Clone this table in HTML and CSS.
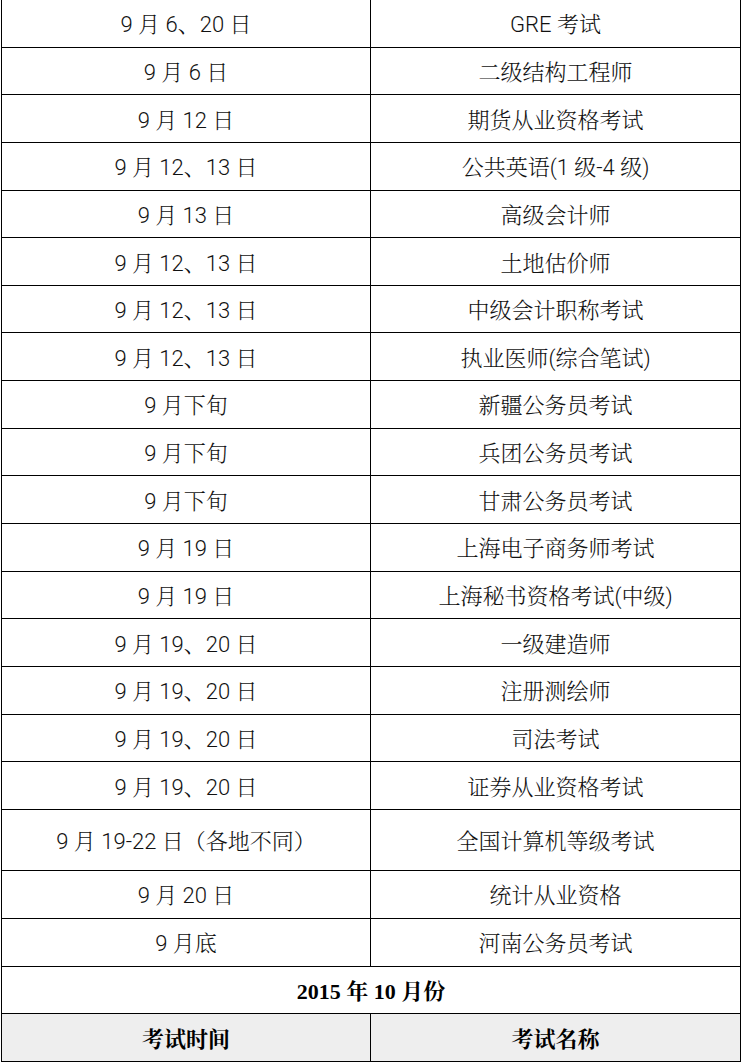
FILE: index.html
```html
<!DOCTYPE html>
<html lang="zh-CN">
<head>
<meta charset="utf-8">
<title>考试时间表</title>
<link rel="stylesheet" href="styles.css">
</head>
<body>
<div class="sheet">
  <div class="cell">9 月 6、20 日</div><div class="cell">GRE 考试</div>
  <div class="cell">9 月 6 日</div><div class="cell">二级结构工程师</div>
  <div class="cell">9 月 12 日</div><div class="cell">期货从业资格考试</div>
  <div class="cell">9 月 12、13 日</div><div class="cell">公共英语(1 级-4 级)</div>
  <div class="cell">9 月 13 日</div><div class="cell">高级会计师</div>
  <div class="cell">9 月 12、13 日</div><div class="cell">土地估价师</div>
  <div class="cell">9 月 12、13 日</div><div class="cell">中级会计职称考试</div>
  <div class="cell">9 月 12、13 日</div><div class="cell">执业医师(综合笔试)</div>
  <div class="cell">9 月下旬</div><div class="cell">新疆公务员考试</div>
  <div class="cell">9 月下旬</div><div class="cell">兵团公务员考试</div>
  <div class="cell">9 月下旬</div><div class="cell">甘肃公务员考试</div>
  <div class="cell">9 月 19 日</div><div class="cell">上海电子商务师考试</div>
  <div class="cell">9 月 19 日</div><div class="cell">上海秘书资格考试(中级)</div>
  <div class="cell">9 月 19、20 日</div><div class="cell">一级建造师</div>
  <div class="cell">9 月 19、20 日</div><div class="cell">注册测绘师</div>
  <div class="cell">9 月 19、20 日</div><div class="cell">司法考试</div>
  <div class="cell">9 月 19、20 日</div><div class="cell">证券从业资格考试</div>
  <div class="cell">9 月 19-22 日（各地不同）</div><div class="cell">全国计算机等级考试</div>
  <div class="cell">9 月 20 日</div><div class="cell">统计从业资格</div>
  <div class="cell">9 月底</div><div class="cell">河南公务员考试</div>
  <div class="cell month">2015 年 10 月份</div>
  <div class="cell head">考试时间</div><div class="cell head">考试名称</div>
</div>
</body>
</html>
```
FILE: styles.css
```css
html, body {
  margin: 0;
  padding: 0;
  background: #ffffff;
}
.sheet {
  margin-left: 1px;
  width: 738px;
  display: grid;
  grid-template-columns: 369px 369px;
  grid-template-rows: repeat(17, 47.65px) 61px repeat(4, 47.85px);
  border-left: 1px solid #000;
  border-right: 1px solid #000;
  font-family: "Roboto", "Liberation Sans", "Noto Serif CJK SC", "Noto Sans CJK SC", sans-serif;
  font-size: 22px;
  font-weight: 300;
  color: #111;
}
.cell {
  display: flex;
  align-items: center;
  justify-content: center;
  padding-bottom: 1px;
  border-bottom: 1px solid #000;
  white-space: nowrap;
  box-sizing: border-box;
}
.cell:nth-child(odd) {
  border-right: 1px solid #000;
}
.month {
  grid-column: 1 / 3;
  font-family: "Liberation Serif", "Noto Serif CJK SC", "Noto Sans CJK SC", serif;
  font-weight: 700;
  color: #000;
}
.sheet .month {
  border-right: none;
}
.head {
  background: #eeeeee;
  font-weight: 700;
  color: #000;
}
.month + .head {
  border-right: 1px solid #000;
}
.month + .head + .head {
  border-right: none;
}
```
